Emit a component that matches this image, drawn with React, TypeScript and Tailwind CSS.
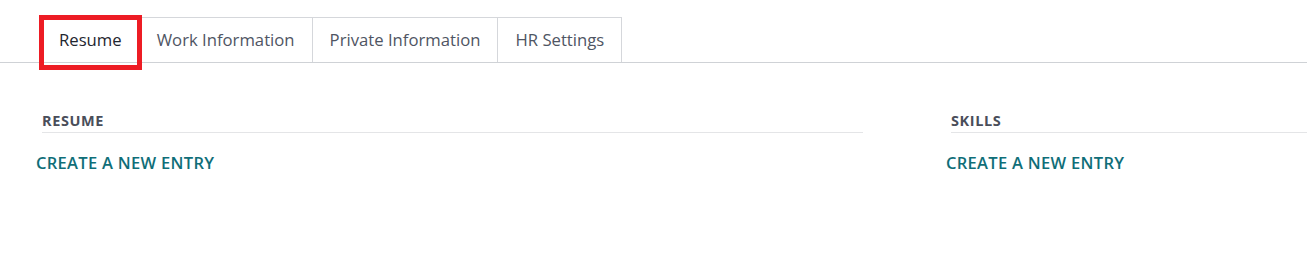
import React from "react";

const font = { fontFamily: '"Open Sans", "Noto Sans", Arial, sans-serif' };

function Tab({ label, active }: { label: string; active?: boolean }) {
  return (
    <div
      className={
        "h-[45px] px-[17px] flex items-center border-t border-r border-[#d5d7db] bg-white text-[16.7px] leading-[24px] " +
        (active ? "text-[#1f2630] border-l -mb-px" : "text-[#4f5563]")
      }
    >
      {label}
    </div>
  );
}

export default function App() {
  return (
    <div className="relative w-[1307px] h-[256px] bg-white overflow-hidden" style={font}>
      <div className="pt-[17px] border-b border-[#cfd2d6] flex pl-[41px]">
        <Tab label="Resume" active />
        <Tab label="Work Information" />
        <Tab label="Private Information" />
        <Tab label="HR Settings" />
      </div>

      <div className="flex pt-[48px]">
        <div className="pl-[36px] w-[863px]">
          <div className="ml-[6px] border-b border-[#e4e5e7] pb-[1px] text-[14.5px] tracking-[0.6px] font-bold text-[#4a4e5a] leading-[20px] uppercase">
            Resume
          </div>
          <div className="mt-[19px] text-[16.5px] tracking-[0.3px] font-semibold text-[#0f6e78] leading-[22px] uppercase">
            Create a new entry
          </div>
        </div>
        <div className="pl-[83px] flex-1">
          <div className="ml-[5px] border-b border-[#e4e5e7] pb-[1px] text-[14.5px] tracking-[0.6px] font-bold text-[#4a4e5a] leading-[20px] uppercase">
            Skills
          </div>
          <div className="mt-[19px] text-[16.5px] tracking-[0.3px] font-semibold text-[#0f6e78] leading-[22px] uppercase">
            Create a new entry
          </div>
        </div>
      </div>

      <div className="absolute left-[39px] top-[15px] w-[103px] h-[55px] border-[5px] border-[#ed1c24]" />
    </div>
  );
}
